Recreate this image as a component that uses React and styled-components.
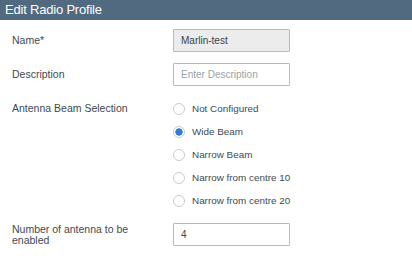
import React, { useState } from "react";
import styled, { createGlobalStyle } from "styled-components";

const GlobalStyle = createGlobalStyle`
  html, body {
    margin: 0;
    padding: 0;
    background: #ffffff;
    font-family: "Liberation Sans", Arial, sans-serif;
  }
`;

const beams = [
  "Not Configured",
  "Wide Beam",
  "Narrow Beam",
  "Narrow from centre 10",
  "Narrow from centre 20",
];

function App() {
  const [beam, setBeam] = useState("Wide Beam");
  return (
    <Panel>
      <GlobalStyle />
      <Header>Edit Radio Profile</Header>
      <Form>
        <Row>
          <Label>Name*</Label>
          <Input value="Marlin-test" readOnly disabled />
        </Row>
        <Row>
          <Label>Description</Label>
          <Input placeholder="Enter Description" />
        </Row>
        <Row top>
          <Label top>Antenna Beam Selection</Label>
          <RadioList>
            {beams.map((b) => (
              <RadioRow key={b} onClick={() => setBeam(b)}>
                <Radio checked={beam === b} />
                <RadioText>{b}</RadioText>
              </RadioRow>
            ))}
          </RadioList>
        </Row>
        <Row>
          <Label>Number of antenna to be enabled</Label>
          <Input defaultValue="4" />
        </Row>
      </Form>
    </Panel>
  );
}

export default App;

const Panel = styled.div`
  width: 412px;
  height: 272px;
  background: #fff;
`;

const Header = styled.div`
  height: 20px;
  line-height: 20px;
  background: #526a7f;
  color: #fff;
  font-size: 13px;
  padding-left: 5px;
  letter-spacing: -0.2px;
`;

const Form = styled.div`
  display: flex;
  flex-direction: column;
  gap: 11px;
  padding: 9px 0 0 12px;
`;

const Row = styled.div`
  display: grid;
  grid-template-columns: 161px 117px;
  align-items: ${(p) => (p.top ? "start" : "center")};
`;

const Label = styled.div`
  color: #3d4a52;
  font-size: 10.5px;
  line-height: 11px;
  padding-right: 28px;
  padding-top: ${(p) => (p.top ? "6px" : "0")};
`;

const Input = styled.input`
  box-sizing: border-box;
  width: 117px;
  height: 23px;
  border: 1px solid #a8c0ce;
  border-radius: 1px;
  padding: 0 7px;
  font-family: "Liberation Sans", Arial, sans-serif;
  font-size: 10px;
  color: #3a3f44;
  background: #fff;
  outline: none;

  &:disabled {
    background: #ececec;
    color: #3a3f44;
    -webkit-text-fill-color: #3a3f44;
  }

  &::placeholder {
    color: #9aa3a9;
  }
`;

const RadioList = styled.div`
  display: flex;
  flex-direction: column;
  width: 200px;
`;

const RadioRow = styled.label`
  display: flex;
  align-items: center;
  height: 23px;
  cursor: pointer;
`;

const Radio = styled.span`
  box-sizing: border-box;
  width: 12px;
  height: 12px;
  border-radius: 50%;
  border: 1px solid #c8cdd0;
  background: ${(p) => (p.checked ? "radial-gradient(circle, #2a7dd6 0 3.4px, #fff 3.9px)" : "#fff")};
  margin-left: 0;
  margin-right: 7px;
  flex: none;
`;

const RadioText = styled.span`
  color: #3d4a52;
  font-size: 9.9px;
`;
